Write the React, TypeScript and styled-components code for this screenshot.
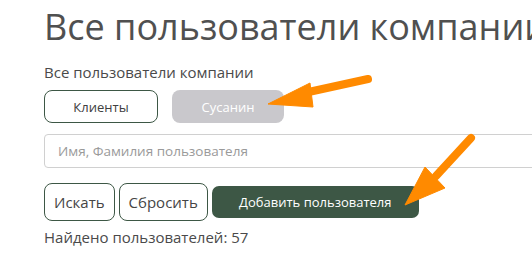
import React from "react";
import styled, { createGlobalStyle } from "styled-components";

const GlobalStyle = createGlobalStyle`
  html, body {
    margin: 0;
    padding: 0;
    background: #ffffff;
    overflow: hidden;
  }
  body {
    font-family: "Open Sans", "Liberation Sans", sans-serif;
    color: #505050;
  }
`;

const Page = styled.div`
  position: relative;
  width: 640px;
  padding: 5px 0 0 44px;
`;

const Title = styled.h1`
  margin: 0;
  font-size: 36px;
  line-height: 44px;
  font-weight: 400;
  color: #505050;
  white-space: nowrap;
`;

const Caption = styled.div`
  margin-top: 13px;
  font-size: 15px;
  line-height: 20px;
  color: #4a4a4a;
`;

const Tabs = styled.div`
  display: flex;
  gap: 14px;
  margin-top: 8px;
`;

const Tab = styled.button<{ $disabled?: boolean }>`
  height: 33px;
  width: ${(p) => (p.$disabled ? "112px" : "114px")};
  border-radius: 8px;
  font-family: inherit;
  font-size: 13px;
  border: ${(p) => (p.$disabled ? "none" : "1px solid #3d5745")};
  background: ${(p) => (p.$disabled ? "#c9c8cc" : "#ffffff")};
  color: ${(p) => (p.$disabled ? "#ffffff" : "#404040")};
`;

const SearchInput = styled.input`
  display: block;
  box-sizing: border-box;
  margin-top: 11px;
  width: 560px;
  height: 34px;
  padding: 0 13px;
  border: 1px solid #d0d0d0;
  border-radius: 4px;
  font-family: inherit;
  font-size: 13.5px;
  color: #505050;
  outline: none;

  &::placeholder {
    color: #9a9a9a;
  }
`;

const Actions = styled.div`
  display: flex;
  align-items: center;
  gap: 4px;
  margin-top: 15px;
`;

const OutlineButton = styled.button`
  box-sizing: border-box;
  height: 38px;
  padding: 0 9px;
  border: 1px solid #3d5745;
  border-radius: 8px;
  background: #ffffff;
  font-family: inherit;
  font-size: 15px;
  color: #454545;
`;

const PrimaryButton = styled.button`
  box-sizing: border-box;
  height: 32px;
  width: 207px;
  border: none;
  border-radius: 7px;
  background: #3d5745;
  font-family: inherit;
  font-size: 13px;
  color: #ffffff;
`;

const Found = styled.div`
  margin-top: 5px;
  font-size: 15px;
  line-height: 22px;
  font-weight: 500;
  color: #4a4a4a;
`;

const Arrows = styled.svg`
  position: absolute;
  left: 0;
  top: 0;
  pointer-events: none;
`;

const Arrow = ({ d, head }: { d: string; head: string }) => (
  <g fill="#ff8a00" stroke="#ff8a00">
    <path d={d} strokeWidth={8} strokeLinecap="round" fill="none" />
    <polygon points={head} strokeWidth={1} strokeLinejoin="round" />
  </g>
);

export default function App() {
  return (
    <>
      <GlobalStyle />
      <Page>
        <Title>Все пользователи компании</Title>
        <Caption>Все пользователи компании</Caption>
        <Tabs>
          <Tab>Клиенты</Tab>
          <Tab $disabled>Сусанин</Tab>
        </Tabs>
        <SearchInput placeholder="Имя, Фамилия пользователя" />
        <Actions>
          <OutlineButton>Искать</OutlineButton>
          <OutlineButton>Сбросить</OutlineButton>
          <PrimaryButton>Добавить пользователя</PrimaryButton>
        </Actions>
        <Found>Найдено пользователей: 57</Found>
        <Arrows width="532" height="278" viewBox="0 0 532 278">
          <Arrow d="M368 79 L304 93" head="268,104 310,83 313,107" />
          <Arrow d="M471 138 L436 176" head="405,205 425,167 445,188" />
        </Arrows>
      </Page>
    </>
  );
}
